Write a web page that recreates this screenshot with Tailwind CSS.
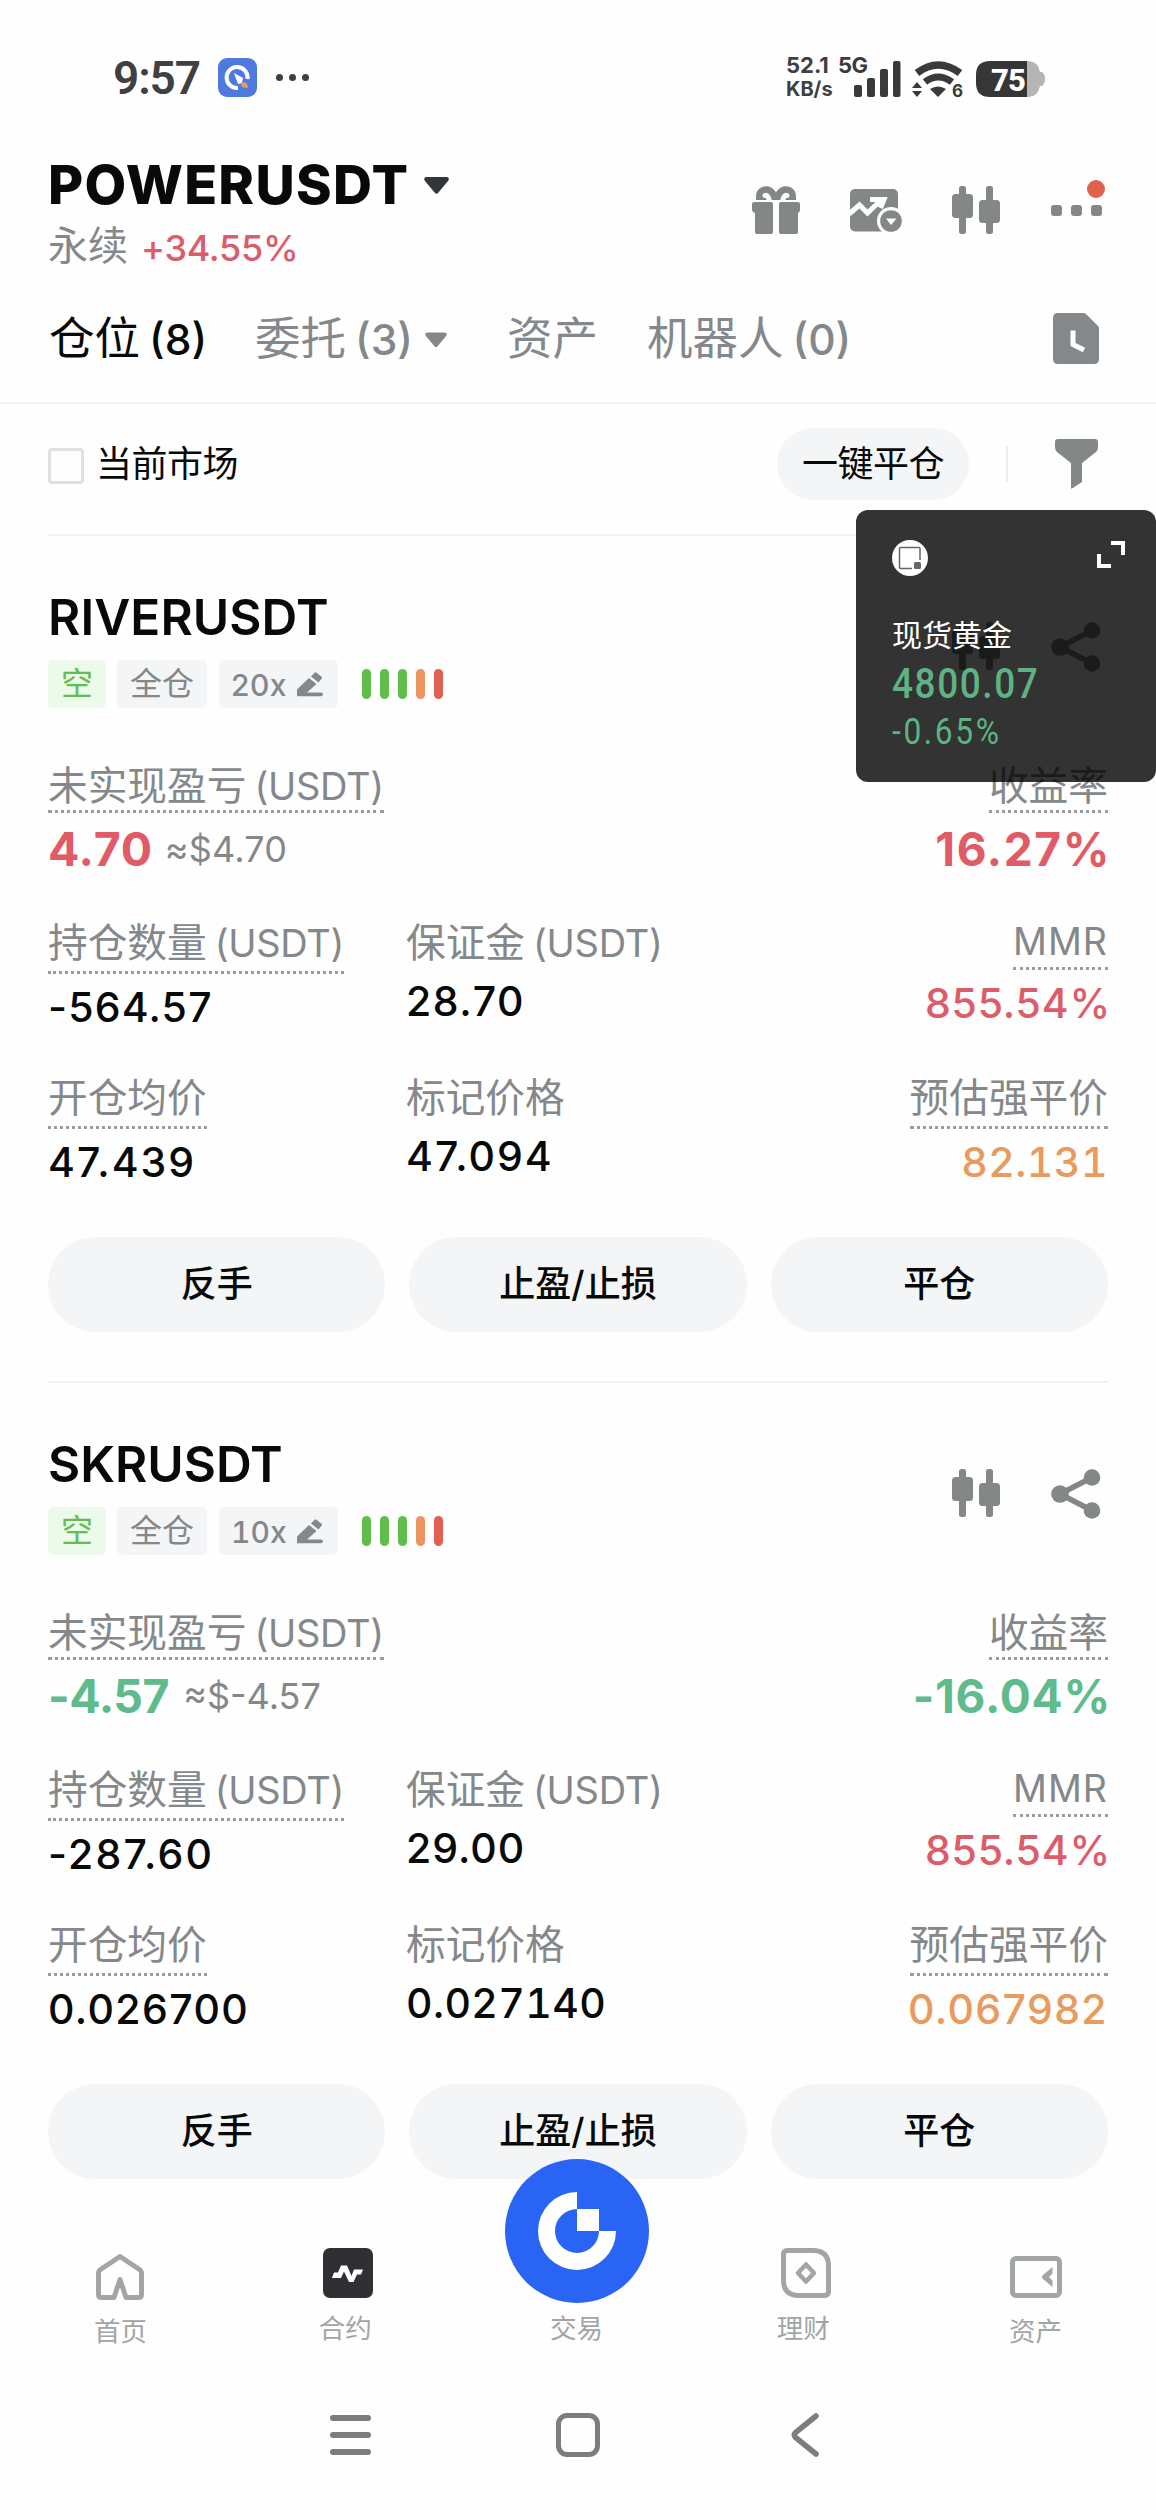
<!DOCTYPE html>
<html lang="zh-CN">
<head>
<meta charset="utf-8">
<title>合约仓位</title>
<script src="https://cdn.jsdelivr.net/npm/@tailwindcss/browser@4"></script>
</head>
<body class="relative w-[1156px] h-[2510px] overflow-hidden bg-[#fefefe] text-[#080a0a] whitespace-nowrap font-[Inter,'Noto_Sans_CJK_SC',sans-serif]">

<svg class="hidden">
  <symbol id="candles" viewBox="0 0 48 48">
    <rect x="7" y="0" width="7" height="48" rx="2.5"/><rect x="0" y="8" width="21" height="24" rx="3.5"/>
    <rect x="34" y="0" width="7" height="48" rx="2.5"/><rect x="27" y="14" width="21" height="23" rx="3.5"/>
  </symbol>
  <symbol id="share" viewBox="0 0 50 50">
    <path d="M41 8.5L9 25l32 16.5" fill="none" stroke="currentColor" stroke-width="5.5"/>
    <circle cx="41" cy="8.5" r="8.3"/><circle cx="9" cy="25" r="8.8"/><circle cx="41" cy="41.5" r="8.3"/>
  </symbol>
  <symbol id="pencil" viewBox="0 0 26 25">
    <path d="M0 24V17.500L12 6l7.500 6L10 20.500H24q2 0 2 1.700t-2 2H1Q0 24.500 0 24z"/><path d="M14 4.500L17.500.8q1-1 2 0l5 4q1 .8.2 1.800L21.500 10.500z"/>
  </symbol>
</svg>

<!-- status bar -->
<div class="h-[155px] flex items-center justify-between pl-[113px] pr-[111px] text-[#404040]">
  <div class="flex items-center">
    <span class="w-[105px] text-[46px] leading-[50px] font-semibold tracking-[-1.100px] font-[Roboto]">9:57</span>
    <svg width="39" height="39" viewBox="0 0 39 39"><rect width="39" height="39" rx="9" fill="#5079e0"/><path d="M20 30A10.500 10.500 0 1 1 29.500 21" fill="none" stroke="#fff" stroke-width="4"/><path d="M16 15l9 5-1 5-4 1z" fill="#fff"/><path d="M24 25q5-3 6 5-6 0-7-3z" fill="#e9a04c"/></svg>
    <div class="flex gap-[6px] ml-[19px] -mt-px"><i class="size-[7px] rounded-full bg-[#404040]"></i><i class="size-[7px] rounded-full bg-[#404040]"></i><i class="size-[7px] rounded-full bg-[#404040]"></i></div>
  </div>
  <div class="flex items-center">
    <div class="font-bold text-[22px] leading-[24px] w-[51px] -mt-[2px]"><div>52.1</div><div class="text-[20px]">KB/s</div></div>
    <svg width="208" height="52" viewBox="837 50 208 52" fill="#3a3a3a">
      <text x="838" y="71" font-size="22" font-weight="700" font-family="Inter" letter-spacing="-.5">5G</text>
      <rect x="854" y="83" width="8" height="12" rx="2"/><rect x="867" y="76" width="8" height="19" rx="2"/><rect x="880" y="67" width="8" height="28" rx="2"/><rect x="893" y="59" width="7.500" height="36" rx="2"/>
      <path d="M917 71Q938 55 960 71" fill="none" stroke="#3a3a3a" stroke-width="7.500"/>
      <path d="M925 80Q938 70 952 80" fill="none" stroke="#3a3a3a" stroke-width="7"/>
      <path d="M930 87q8-5 16 0l-8 8z"/>
      <path d="M912 86l5-6 5 6zM912 89h10l-5 6z"/>
      <text x="952" y="95" font-size="17" font-weight="700" font-family="Inter">6</text>
      <path d="M1020 59h8q10 0 12 11h2q3 2 3 7t-3 7h-2q-2 11-12 11h-8z" fill="#b5b5b5"/>
      <path d="M990 59h37v36h-37q-14 0-14-14v-8q0-14 14-14z" fill="#363636"/>
      <text x="991" y="88.500" font-size="31" font-weight="800" font-family="Roboto" fill="#fff" letter-spacing="-.8">75</text>
    </svg>
  </div>
</div>

<!-- market header -->
<header class="flex items-center justify-between pl-[48px] pr-[48px] h-[116px]">
  <div>
    <div class="flex items-center h-[60px]">
      <h1 class="text-[54px] font-extrabold tracking-[1.300px] leading-[60px] w-[361px]">POWERUSDT</h1>
      <svg class="ml-[15px]" width="25" height="17" viewBox="0 0 25 17" fill="#333638"><path d="M2 0h21q3 1 1 4L14 16q-1.500 1.500-3 0L1 4Q-1 1 2 0z"/></svg>
    </div>
    <div class="mt-[6px] h-[50px] leading-[50px] flex text-[40px] text-[#85888a]">永续<span class="ml-[13px] pt-[2px] text-[36px] font-medium tracking-[-.3px] text-[#dc5d69]">+34.55%</span></div>
  </div>
  <div class="flex items-center -mt-[6px] text-[#838787]">
    <svg width="48" height="48" viewBox="0 0 48 48" fill="currentColor"><path d="M4 14V10C4 0 18-4 24 6.500 30-4 44 0 44 10v4z"/><path d="M13 9.500q3-1 4.500 5.500M35 9.500q-3-1-4.500 5.500" fill="none" stroke="#fefefe" stroke-width="5" stroke-linecap="round"/><path d="M0 14H48V17H0z" fill="#fefefe"/><path d="M3 16h16q2 0 2 2v28q0 2-2 2H5q-2 0-2-2V27q-3-1-3-3v-6q0-2 3-2zM29 16h16q3 0 3 2v6q0 2-2 3v19q0 2-2 2H29q-2 0-2-2V18q0-2 2-2z"/></svg>
    <svg class="ml-[50px]" width="52" height="48" viewBox="0 0 52 48" fill="currentColor"><rect y="3" width="48" height="42.500" rx="5"/><path d="M-1 28L9.500 19 17.500 27 31 14M20 13.500H34L30.500 22" fill="none" stroke="#fefefe" stroke-width="5"/><circle cx="41" cy="35" r="14" fill="#fefefe"/><circle cx="41" cy="35" r="10.800"/><path d="M36 32.500h10.500L41 39z" fill="#fefefe"/></svg>
    <svg class="ml-[50px]" width="48" height="48" fill="currentColor"><use href="#candles"/></svg>
    <div class="relative ml-[50px] w-[58px] flex gap-[9px] pl-px"><i class="size-[11px] rounded-[3px] bg-[#838787]"></i><i class="size-[11px] rounded-[3px] bg-[#838787]"></i><i class="size-[11px] rounded-[3px] bg-[#838787]"></i><i class="absolute left-[37px] -top-[25px] size-[18px] rounded-full bg-[#e0614e]"></i></div>
  </div>
</header>

<!-- tabs -->
<nav class="h-[133px] flex items-center px-[48px] pt-[5px] border-b-2 border-[#f1f2f3] text-[45.500px] leading-[60px] text-[#85888a]">
  <div class="w-[207px] pl-px text-[#080a0a]">仓位<span class="ml-[9px] text-[42.500px] font-medium">(8)</span></div>
  <div class="w-[252px] flex items-center"><span>委托<span class="ml-[9px] text-[42.500px] font-medium">(3)</span></span><svg class="ml-[12px] mt-[1px]" width="22" height="16" viewBox="0 0 25 17" fill="currentColor"><path d="M2 0h21q3 1 1 4L14 16q-1.500 1.500-3 0L1 4Q-1 1 2 0z"/></svg></div>
  <div class="w-[140px]">资产</div>
  <div>机器人<span class="ml-[9px] text-[42.500px] font-medium">(0)</span></div>
  <svg class="ml-auto mr-[9px] -mt-[2px]" width="46" height="51" viewBox="0 0 46 51" fill="currentColor"><path d="M5 0H30q2 0 3 1L45 13q1 1 1 3V46q0 5-5 5H5q-5 0-5-5V5Q0 0 5 0z"/><path d="M20 17.500V31.500L31 37" fill="none" stroke="#fff" stroke-width="5"/></svg>
</nav>

<!-- filters -->
<div class="mx-[48px] h-[132px] pb-[10px] border-b-2 border-[#f3f3f4] flex items-center text-[36px] leading-[44px] tracking-[-.5px]">
  <i class="size-[36px] mt-[4px] rounded-[4px] border-3 border-[#dfe0e0]"></i>
  <span class="ml-[12px]">当前市场</span>
  <button class="ml-auto w-[192px] h-[72px] rounded-full bg-[#f4f5f7]">一键平仓</button>
  <i class="ml-[37px] w-[2px] h-[36px] bg-[#eef0f0]"></i>
  <svg class="ml-[47px] mr-[10px]" width="43" height="50" viewBox="0 0 43 50" fill="#838787"><path d="M3 0h37q3 0 3 3v5q0 3-2 5L27 24v19l-10 6.500q-1 .5-1-1V24L2 13Q0 11 0 8V3Q0 0 3 0z"/></svg>
</div>

<main class="h-[1671px] overflow-hidden">
  <section class="mx-[48px] h-[847px] border-b-2 border-[#f1f2f3]">
    <div class="flex justify-between pt-[51px]">
      <div>
        <h2 class="text-[49.500px] font-semibold leading-[60px] tracking-[.1px]">RIVERUSDT</h2>
        <div class="mt-[13px] flex items-center h-[48px] text-[32px] text-[#85888a]">
          <span class="w-[58px] h-[48px] leading-[47px] text-center rounded-[5px] bg-[#ebfaea] text-[#62bd52]">空</span>
          <span class="ml-[11px] w-[90px] h-[48px] leading-[47px] text-center rounded-[5px] bg-[#f4f5f7]">全仓</span>
          <span class="ml-[12px] w-[119px] h-[48px] rounded-[5px] bg-[#f4f5f7] flex items-center pl-[12px] pt-[2px] text-[30px] font-medium tracking-[.4px]">20x<svg class="ml-auto mr-[15px] -mt-[2px]" width="26" height="25" fill="currentColor"><use href="#pencil"/></svg></span>
          <span class="ml-[24px] flex gap-[9px]"><i class="w-[9px] h-[30px] rounded-full bg-[#5fbd4a]"></i><i class="w-[9px] h-[30px] rounded-full bg-[#5fbd4a]"></i><i class="w-[9px] h-[30px] rounded-full bg-[#5fbd4a]"></i><i class="w-[9px] h-[30px] rounded-full bg-[#ec9560]"></i><i class="w-[9px] h-[30px] rounded-full bg-[#e2604f]"></i></span>
        </div>
      </div>
      <div class="flex gap-[51px] pt-[35px] pr-[7px] text-[#838787]">
        <svg width="48" height="48" fill="currentColor"><use href="#candles"/></svg>
        <svg width="50" height="50" fill="currentColor"><use href="#share"/></svg>
      </div>
    </div>
    <div class="mt-[52px] flex justify-between">
      <div class="flex flex-col items-start">
        <div class="pt-[2px] text-[39.700px] leading-[48px] text-[#85888a] border-b-3 border-dotted border-[#9a9c9e]">未实现盈亏<span class="ml-[8px] text-[38px] tracking-[-.3px]">(USDT)</span></div>
        <div class="mt-[13px] leading-[46px] flex"><span class="text-[46.500px] font-bold tracking-[.7px] text-[#e05b66]">4.70</span><span class="ml-[12px] text-[36px] tracking-[.2px] text-[#85888a]">≈$4.70</span></div>
      </div>
      <div class="flex flex-col items-end">
        <div class="pt-[2px] text-[39.700px] leading-[48px] text-[#85888a] border-b-3 border-dotted border-[#9a9c9e]">收益率</div>
        <div class="mt-[13px] text-[46px] leading-[46px] font-bold tracking-[1.600px] -mr-[3px] text-[#e05b66]">16.27%</div>
      </div>
    </div>
    <div class="mt-[45px] h-[113px] grid grid-cols-[358px_1fr_auto] text-[41px] leading-[46px] font-medium tracking-[1.600px]">
      <div class="flex flex-col items-start">
        <div class="pt-[2px] pb-[4px] text-[39.700px] leading-[48px] font-normal tracking-normal text-[#85888a] border-b-3 border-dotted border-[#9a9c9e]">持仓数量<span class="ml-[8px] text-[38px] tracking-[-.3px]">(USDT)</span></div>
        <div class="mt-[10px] tracking-[1.200px]">-564.57</div>
      </div>
      <div>
        <div class="pt-[2px] text-[39.700px] leading-[48px] font-normal tracking-normal text-[#85888a]">保证金<span class="ml-[8px] text-[38px] tracking-[-.3px]">(USDT)</span></div>
        <div class="mt-[11px]">28.70</div>
      </div>
      <div class="flex flex-col items-end">
        <div class="text-[37.500px] leading-[50px] font-normal tracking-[1px] text-[#85888a] border-b-3 border-dotted border-[#9a9c9e]">MMR</div>
        <div class="mt-[10px] text-[#dc5d69] tracking-[.8px] -mr-[3px]">855.54%</div>
      </div>
    </div>
    <div class="mt-[42px] h-[113px] grid grid-cols-[358px_1fr_auto] text-[41px] leading-[46px] font-medium tracking-[2px]">
      <div class="flex flex-col items-start">
        <div class="pt-[2px] pb-[4px] text-[39.700px] leading-[48px] font-normal tracking-normal text-[#85888a] border-b-3 border-dotted border-[#9a9c9e]">开仓均价</div>
        <div class="mt-[10px]">47.439</div>
      </div>
      <div>
        <div class="pt-[2px] text-[39.700px] leading-[48px] font-normal tracking-normal text-[#85888a]">标记价格</div>
        <div class="mt-[11px]">47.094</div>
      </div>
      <div class="flex flex-col items-end">
        <div class="pt-[2px] pb-[4px] text-[39.700px] leading-[48px] font-normal tracking-normal text-[#85888a] border-b-3 border-dotted border-[#9a9c9e]">预估强平价</div>
        <div class="mt-[10px] text-[#e99b5d] tabular-nums tracking-[.5px]">82.131</div>
      </div>
    </div>
    <div class="mt-[52px] grid grid-cols-3 gap-[24px] text-[36px] font-medium">
      <button class="h-[95px] pb-px rounded-full bg-[#f4f5f7]">反手</button>
      <button class="h-[95px] pb-px rounded-full bg-[#f4f5f7]">止盈/止损</button>
      <button class="h-[95px] pb-px rounded-full bg-[#f4f5f7]">平仓</button>
    </div>
  </section>

  <section class="mx-[48px] h-[847px]">
    <div class="flex justify-between pt-[51px]">
      <div>
        <h2 class="text-[49.500px] font-semibold leading-[60px]">SKRUSDT</h2>
        <div class="mt-[13px] flex items-center h-[48px] text-[32px] text-[#85888a]">
          <span class="w-[58px] h-[48px] leading-[47px] text-center rounded-[5px] bg-[#ebfaea] text-[#62bd52]">空</span>
          <span class="ml-[11px] w-[90px] h-[48px] leading-[47px] text-center rounded-[5px] bg-[#f4f5f7]">全仓</span>
          <span class="ml-[12px] w-[119px] h-[48px] rounded-[5px] bg-[#f4f5f7] flex items-center pl-[12px] pt-[2px] text-[30px] font-medium tabular-nums">10x<svg class="ml-auto mr-[15px] -mt-[2px]" width="26" height="25" fill="currentColor"><use href="#pencil"/></svg></span>
          <span class="ml-[24px] flex gap-[9px]"><i class="w-[9px] h-[30px] rounded-full bg-[#5fbd4a]"></i><i class="w-[9px] h-[30px] rounded-full bg-[#5fbd4a]"></i><i class="w-[9px] h-[30px] rounded-full bg-[#5fbd4a]"></i><i class="w-[9px] h-[30px] rounded-full bg-[#ec9560]"></i><i class="w-[9px] h-[30px] rounded-full bg-[#e2604f]"></i></span>
        </div>
      </div>
      <div class="flex gap-[51px] pt-[35px] pr-[7px] text-[#838787]">
        <svg width="48" height="48" fill="currentColor"><use href="#candles"/></svg>
        <svg width="50" height="50" fill="currentColor"><use href="#share"/></svg>
      </div>
    </div>
    <div class="mt-[52px] flex justify-between">
      <div class="flex flex-col items-start">
        <div class="pt-[2px] text-[39.700px] leading-[48px] text-[#85888a] border-b-3 border-dotted border-[#9a9c9e]">未实现盈亏<span class="ml-[8px] text-[38px] tracking-[-.3px]">(USDT)</span></div>
        <div class="mt-[13px] leading-[46px] flex"><span class="text-[46.500px] font-bold tracking-[-.5px] text-[#5fbb8c]">-4.57</span><span class="ml-[14px] text-[36px] text-[#85888a]">≈$-4.57</span></div>
      </div>
      <div class="flex flex-col items-end">
        <div class="pt-[2px] text-[39.700px] leading-[48px] text-[#85888a] border-b-3 border-dotted border-[#9a9c9e]">收益率</div>
        <div class="mt-[13px] text-[46px] leading-[46px] font-bold tracking-[.8px] -mr-[3px] text-[#5fbb8c]">-16.04%</div>
      </div>
    </div>
    <div class="mt-[45px] h-[113px] grid grid-cols-[358px_1fr_auto] text-[41px] leading-[46px] font-medium tracking-[1.600px]">
      <div class="flex flex-col items-start">
        <div class="pt-[2px] pb-[4px] text-[39.700px] leading-[48px] font-normal tracking-normal text-[#85888a] border-b-3 border-dotted border-[#9a9c9e]">持仓数量<span class="ml-[8px] text-[38px] tracking-[-.3px]">(USDT)</span></div>
        <div class="mt-[10px] tracking-[2.200px]">-287.60</div>
      </div>
      <div>
        <div class="pt-[2px] text-[39.700px] leading-[48px] font-normal tracking-normal text-[#85888a]">保证金<span class="ml-[8px] text-[38px] tracking-[-.3px]">(USDT)</span></div>
        <div class="mt-[11px] tracking-[1px]">29.00</div>
      </div>
      <div class="flex flex-col items-end">
        <div class="text-[37.500px] leading-[50px] font-normal tracking-[1px] text-[#85888a] border-b-3 border-dotted border-[#9a9c9e]">MMR</div>
        <div class="mt-[10px] text-[#dc5d69] tracking-[.8px] -mr-[3px]">855.54%</div>
      </div>
    </div>
    <div class="mt-[42px] h-[113px] grid grid-cols-[358px_1fr_auto] text-[41px] leading-[46px] font-medium tracking-[1.400px]">
      <div class="flex flex-col items-start">
        <div class="pt-[2px] pb-[4px] text-[39.700px] leading-[48px] font-normal tracking-normal text-[#85888a] border-b-3 border-dotted border-[#9a9c9e]">开仓均价</div>
        <div class="mt-[10px]">0.026700</div>
      </div>
      <div>
        <div class="pt-[2px] text-[39.700px] leading-[48px] font-normal tracking-normal text-[#85888a]">标记价格</div>
        <div class="mt-[11px] tabular-nums tracking-[.4px]">0.027140</div>
      </div>
      <div class="flex flex-col items-end">
        <div class="pt-[2px] pb-[4px] text-[39.700px] leading-[48px] font-normal tracking-normal text-[#85888a] border-b-3 border-dotted border-[#9a9c9e]">预估强平价</div>
        <div class="mt-[10px] text-[#e99b5d]">0.067982</div>
      </div>
    </div>
    <div class="mt-[52px] grid grid-cols-3 gap-[24px] text-[36px] font-medium">
      <button class="h-[95px] pb-px rounded-full bg-[#f4f5f7]">反手</button>
      <button class="h-[95px] pb-px rounded-full bg-[#f4f5f7]">止盈/止损</button>
      <button class="h-[95px] pb-px rounded-full bg-[#f4f5f7]">平仓</button>
    </div>
  </section>
</main>

<!-- app tab bar -->
<nav class="relative h-[163px] px-[6px] grid grid-cols-5 text-[26.500px] leading-[30px] text-[#a2a5a5]">
  <a class="flex flex-col items-center pt-[47px]"><svg width="48" height="46" viewBox="0 0 48 46" fill="none" stroke="currentColor" stroke-width="5" stroke-linejoin="round"><path d="M24 2.500L4.500 15.500Q2.500 17 2.500 19V40.500q0 3 3 3H18L24 25.500 30 43.500H42.500q3 0 3-3V19q0-2-2-3.500z"/></svg><span class="mt-[16px]">首页</span></a>
  <a class="flex flex-col items-center pt-[41px]"><svg class="mr-[2px]" width="50" height="50" viewBox="0 0 50 50"><rect width="50" height="50" rx="7" fill="#2f3033"/><path d="M9 30L11 24.500H15L18 17.500H24L28.500 28 31 21.500H40L38 26.500H34L30.500 34H26L21 23.500 18 30Z" fill="#fff"/></svg><span class="mt-[15px] mr-[8px]">合约</span></a>
  <a class="flex flex-col items-center"><svg class="-mt-[48px] mr-[2px]" width="144" height="144" viewBox="-72 -72 144 144"><circle r="72" fill="#2a64f5"/><path d="M0-39A39 39 0 1 0 39 0H22A22 22 0 1 1 0-22zM0-22H22V0H0z" fill="#fff"/></svg><span class="mt-[10px] mr-[3px]">交易</span></a>
  <a class="flex flex-col items-center pt-[41px]"><svg class="mr-[2px]" width="50" height="50" viewBox="0 0 50 50" fill="none" stroke="currentColor" stroke-width="5"><path d="M6.500 2.500H33Q47 3 47.500 17V43.500q0 4-4 4H17Q3 47 2.500 33V6.500q0-4 4-4z"/><path d="M25 16.500L33 25 25 33.500 17 25z" stroke-width="4.500" stroke-linejoin="round"/></svg><span class="mt-[15px] mr-[7px]">理财</span></a>
  <a class="flex flex-col items-center pt-[49px]"><svg width="52" height="42" viewBox="0 0 52 42" fill="currentColor"><rect x="2.500" y="2.500" width="47" height="37" rx="3.500" fill="none" stroke="currentColor" stroke-width="5"/><path d="M42.500 11L33 19q-2 2 0 4L42.500 31V24.500L39 21 42.500 17.500z"/></svg><span class="mt-[18px]">资产</span></a>
</nav>

<!-- system navigation -->
<div class="h-[140px] px-[6px] pb-[10px] grid grid-cols-5 items-center justify-items-center text-[#7d7d7d]">
  <div></div>
  <div class="w-[41px] ml-[2px] flex flex-col gap-[11px]"><i class="h-[6px] rounded-full bg-[#7d7d7d]"></i><i class="h-[6px] rounded-full bg-[#7d7d7d]"></i><i class="h-[6px] rounded-full bg-[#7d7d7d]"></i></div>
  <div class="size-[44px] rounded-[11px] border-[5.500px] border-[#7d7d7d]"></div>
  <svg class="mr-[4px]" width="28" height="44" viewBox="0 0 28 44" fill="none" stroke="currentColor" stroke-width="5.500" stroke-linecap="round"><path d="M25 3L4.500 19.500Q2 22 4.500 24.500L25 41"/></svg>
</div>

<!-- floating quote -->
<aside class="absolute left-[856px] top-[510px] w-[300px] h-[272px] rounded-[12px] bg-black/80 pt-[30px] pl-[36px] pr-[31px] text-[#5db384] font-[Roboto,'Noto_Sans_CJK_SC',sans-serif]">
  <div class="flex justify-between h-[36px]">
    <svg width="36" height="36" viewBox="0 0 36 36"><circle cx="18" cy="18" r="18" fill="#fff"/><path d="M20 28.500H8.500q-1 0-1-1V8.500q0-1 1-1H27q1 0 1 1V20" fill="none" stroke="#666" stroke-width="1.500"/><rect x="22" y="22" width="7" height="7" rx="1.500" fill="#666"/></svg>
    <svg class="mt-px" width="28" height="28" viewBox="0 0 28 28" fill="none" stroke="#fff" stroke-width="4"><path d="M14 2H26V14M2 13V25H14"/></svg>
  </div>
  <div class="mt-[42px] text-[30px] leading-[36px] text-white">现货黄金</div>
  <div class="mt-[10px] w-[160px] origin-left scale-x-[.88] text-[42px] leading-[40px] tracking-[1.800px] font-medium">4800.07</div>
  <div class="mt-[8px] w-[140px] origin-left scale-x-[.88] text-[36px] leading-[40px] tracking-[3px]">-0.65%</div>
</aside>
</body>
</html>
